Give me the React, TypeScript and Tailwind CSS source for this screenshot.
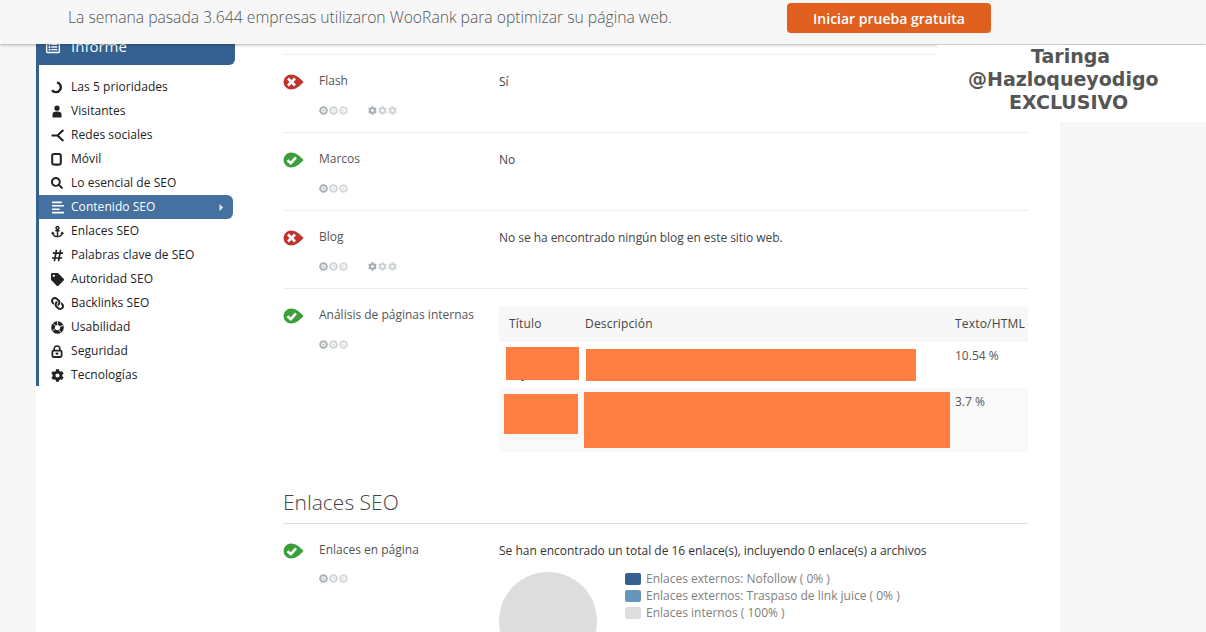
import React from 'react';
import { FaSearch, FaAnchor, FaHashtag, FaTag, FaLink, FaCog, FaCaretRight, FaRegListAlt } from 'react-icons/fa';

const Spinner = () => (
  <svg viewBox="0 0 12 12" className="w-[13px] h-[13px]">
    <path d="M5.5 1.2a4.6 4.6 0 1 1-4.6 7.4" fill="none" stroke="#222" strokeWidth="2.2" />
  </svg>
);

const User = () => (
  <svg viewBox="0 0 12 13" className="w-[12px] h-[13px]">
    <circle cx="6" cy="3.2" r="2.6" fill="#222" />
    <path d="M1.5 12.5V9.5C1.5 7.5 3 6.6 6 6.6s4.5.9 4.5 2.9v3Z" fill="#222" />
  </svg>
);

const Share = () => (
  <svg viewBox="0 0 13 12" className="w-[14px] h-[13px]">
    <path d="M11.5 1 6 6l5.5 5M.5 6H6" fill="none" stroke="#222" strokeWidth="1.9" />
  </svg>
);

const Mobile = () => (
  <svg viewBox="0 0 11 13" className="w-[11px] h-[13px]">
    <rect x="1.2" y="1" width="8.6" height="10.6" rx="1.8" fill="none" stroke="#222" strokeWidth="2" />
    <rect x="4" y="11" width="3" height="1.6" fill="#222" />
  </svg>
);

const Lines = () => (
  <svg viewBox="0 0 13 12" className="w-[14px] h-[13px]">
    <path d="M1 1.2h9M1 4.4h11M1 7.6h7M1 10.8h11" fill="none" stroke="#fff" strokeWidth="1.5" />
  </svg>
);

const Aperture = () => (
  <svg viewBox="0 0 12 12" className="w-[13px] h-[13px]">
    <circle cx="6" cy="6" r="4.1" fill="none" stroke="#222" strokeWidth="3.4" />
    <path d="M6 .5v3M11 4 8.2 5.4M9 10.5 7 8M1.5 9 4 7M2 2.2 4.2 4.6" stroke="#fff" strokeWidth="0.8" />
  </svg>
);

const Lock = () => (
  <svg viewBox="0 0 12 13" className="w-[12px] h-[13px]">
    <path d="M3.2 6V3.8C3.2 2.2 4.4 1 6 1s2.8 1.2 2.8 2.8V6" fill="none" stroke="#222" strokeWidth="1.6" />
    <rect x="1.4" y="5.6" width="9.2" height="6.4" rx="1.2" fill="none" stroke="#222" strokeWidth="1.8" />
    <rect x="4.6" y="7.6" width="2.8" height="2" fill="#222" />
  </svg>
);

const navItems = [
  { label: 'Las 5 prioridades', icon: <Spinner /> },
  { label: 'Visitantes', icon: <User /> },
  { label: 'Redes sociales', icon: <Share /> },
  { label: 'Móvil', icon: <Mobile /> },
  { label: 'Lo esencial de SEO', icon: <FaSearch className="text-[12px] text-[#222]" /> },
  { label: 'Contenido SEO', icon: <Lines />, active: true },
  { label: 'Enlaces SEO', icon: <FaAnchor className="text-[13px] text-[#222]" /> },
  { label: 'Palabras clave de SEO', icon: <FaHashtag className="text-[13px] text-[#222]" /> },
  { label: 'Autoridad SEO', icon: <FaTag className="text-[13px] text-[#222]" /> },
  { label: 'Backlinks SEO', icon: <FaLink className="text-[13px] text-[#222] -scale-x-100" /> },
  { label: 'Usabilidad', icon: <Aperture /> },
  { label: 'Seguridad', icon: <Lock /> },
  { label: 'Tecnologías', icon: <FaCog className="text-[13px] text-[#222]" /> },
];

const StatusIcon = ({ ok }: { ok: boolean }) => (
  <svg viewBox="0 0 21 16" className="w-[21px] h-[16px]">
    <path d="M8 0.5C12.5 0.5 17 4 20.5 8 17 12 12.5 15.5 8 15.5A7.5 7.5 0 0 1 8 0.5Z" fill={ok ? '#3c9f3c' : '#c0342f'} />
    {ok ? (
      <path d="M4.5 8.2 7.8 11.2 13 5.4" fill="none" stroke="#fff" strokeWidth="2.6" />
    ) : (
      <path d="M5 4.5 12 11.5M12 4.5 5 11.5" fill="none" stroke="#fff" strokeWidth="2.6" />
    )}
  </svg>
);

const Dots = () => (
  <div className="flex gap-[1px]">
    {['#a9b2b5', '#d0d4d5', '#d6d9da'].map((c) => (
      <svg key={c} viewBox="0 0 9 9" className="w-[9px] h-[9px]">
        <circle cx="4.5" cy="4.5" r="3.3" fill="none" stroke={c} strokeWidth="2" />
        <circle cx="4.5" cy="4.5" r="1" fill={c} />
      </svg>
    ))}
  </div>
);

const Gears = () => (
  <div className="flex gap-[1px] ml-[20px]">
    <FaCog className="text-[9px] text-[#a3aeb2]" />
    <FaCog className="text-[9px] text-[#cdd2d4]" />
    <FaCog className="text-[9px] text-[#cdd2d4]" />
  </div>
);

const Row = ({
  ok,
  label,
  gears,
  children,
}: {
  ok: boolean;
  label: string;
  gears?: boolean;
  children: React.ReactNode;
}) => (
  <div className="flex border-b border-[#eeeeee] h-[78px] pt-[18px]">
    <div className="w-[36px] pt-[1px] shrink-0">
      <StatusIcon ok={ok} />
    </div>
    <div className="w-[180px] shrink-0">
      <div className="text-[12px] leading-[16px] text-[#555]">{label}</div>
      <div className="flex mt-[17px]">
        <Dots />
        {gears && <Gears />}
      </div>
    </div>
    <div className="flex-1 text-[12px] leading-[16px] text-[#444] pt-[1px] tracking-[-0.05px]">{children}</div>
  </div>
);

const Legend = ({ color, children }: { color: string; children: React.ReactNode }) => (
  <div className="flex items-center h-[17px]">
    <span className={`w-[16px] h-[12px] rounded-[2px] mr-[5px] ${color}`} />
    <span className="text-[12px] text-[#808080]">{children}</span>
  </div>
);

export default function App() {
  return (
    <div
      className="relative flex h-[632px] w-[1206px] overflow-hidden bg-[#f7f7f8]"
      style={{ fontFamily: '"Open Sans", sans-serif' }}
    >
      {/* top promo bar */}
      <div className="absolute top-0 left-0 w-full h-[44px] z-20 bg-[#f7f7f7] shadow-[0_1px_3px_rgba(0,0,0,0.3)] flex items-center">
        <span className="ml-[68px] w-[719px] -mt-[8px] text-[15.7px] font-light text-[#555] whitespace-nowrap">
          La semana pasada 3.644 empresas utilizaron WooRank para optimizar su página web.
        </span>
        <button className="-mt-[8px] w-[204px] h-[30px] rounded-[4px] bg-[#e0611f] text-white text-[14px] font-semibold">
          Iniciar prueba gratuita
        </button>
      </div>

      {/* watermark */}
      <div
        className="absolute z-30 left-[937px] top-[45px] w-[269px] h-[77px] bg-white pl-[31px] text-[#555] text-[19px] font-bold leading-[23px] whitespace-nowrap"
        style={{ fontFamily: '"DejaVu Sans", sans-serif' }}
      >
        <div className="pl-[63px]">Taringa</div>
        <div>@Hazloqueyodigo</div>
        <div className="pl-[41px]">EXCLUSIVO</div>
      </div>

      <div className="w-[36px] shrink-0" />

      <div className="w-[1024px] shrink-0 bg-white flex">
        {/* sidebar */}
        <aside className="w-[247px] shrink-0 pt-[28px]">
          <div className="w-[199px] h-[37px] bg-[#34618f] rounded-br-[6px] flex items-center pl-[10px] text-white text-[15px]">
            <FaRegListAlt className="text-[14px] mr-[11px]" />
            Informe
          </div>
          <nav className="w-[197px] h-[321px] border-l-[3px] border-[#34618f] pt-[10px]">
            {navItems.map((item) => (
              <div
                key={item.label}
                className={`flex items-center h-[24px] text-[12px] ${
                  item.active ? 'bg-[#44719f] text-white rounded-r-[6px]' : 'text-[#222]'
                }`}
              >
                <span className="w-[32px] pl-[12px] flex justify-start">{item.icon}</span>
                <span className="flex-1 tracking-[0.05px]">{item.label}</span>
                {item.active && <FaCaretRight className="text-[11px] mr-[6px] text-[#dde6ee]" />}
              </div>
            ))}
          </nav>
        </aside>

        {/* main column */}
        <main className="w-[745px] shrink-0 pt-[54px]">
          <div className="border-t border-[#eeeeee]" />
          <Row ok={false} label="Flash" gears>
            Sí
          </Row>
          <Row ok label="Marcos">
            No
          </Row>
          <Row ok={false} label="Blog" gears>
            No se ha encontrado ningún blog en este sitio web.
          </Row>

          <div className="flex pt-[18px] h-[164px]">
            <div className="w-[36px] pt-[1px] shrink-0">
              <StatusIcon ok />
            </div>
            <div className="w-[180px] shrink-0">
              <div className="text-[12px] leading-[16px] text-[#555] whitespace-nowrap">Análisis de páginas internas</div>
              <div className="mt-[17px]">
                <Dots />
              </div>
            </div>
            <div className="relative w-[529px] text-[12px] text-[#555]">
              <div className="flex h-[35px] pb-[2px] items-center bg-[#f7f7f7] font-medium text-[#444] tracking-[0.2px]">
                <span className="w-[86px] pl-[10px]">Título</span>
                <span className="w-[370px]">Descripción</span>
                <span className="whitespace-nowrap">Texto/HTML</span>
              </div>
              <div className="h-[46px] pl-[456px] pt-[5px]">10.54 %</div>
              <div className="h-[64px] pl-[456px] pt-[5px] bg-[#f9f9f9]">3.7 %</div>
              {/* redactions from the screenshot */}
              <div className="absolute left-[22px] top-[73px] w-[3px] h-[1px] bg-[#666]" />
              <div className="absolute left-[7px] top-[40px] w-[73px] h-[33px] bg-[#fe7f41]" />
              <div className="absolute left-[87px] top-[42px] w-[330px] h-[32px] bg-[#fe7f41]" />
              <div className="absolute left-[5px] top-[87px] w-[74px] h-[40px] bg-[#fe7f41]" />
              <div className="absolute left-[85px] top-[85px] w-[366px] h-[56px] bg-[#fe7f41]" />
            </div>
          </div>

          <h2 className="mt-[34px] text-[21px] font-light leading-[31px] text-[#444] border-b border-[#dddddd] h-[37px] w-[745px]">
            Enlaces SEO
          </h2>

          <div className="flex pt-[18px]">
            <div className="w-[36px] pt-[1px] shrink-0">
              <StatusIcon ok />
            </div>
            <div className="w-[180px] shrink-0">
              <div className="text-[12px] leading-[16px] text-[#555]">Enlaces en página</div>
              <div className="mt-[16px]">
                <Dots />
              </div>
            </div>
            <div className="flex-1">
              <div className="text-[12px] leading-[16px] text-[#333] pt-[1px] whitespace-nowrap">
                Se han encontrado un total de 16 enlace(s), incluyendo 0 enlace(s) a archivos
              </div>
              <div className="flex mt-[13px]">
                <div className="w-[98px] h-[98px] rounded-full bg-[#dddddd]" />
                <div className="ml-[28px] -mt-[2px]">
                  <Legend color="bg-[#34618f]">Enlaces externos: Nofollow ( 0% )</Legend>
                  <Legend color="bg-[#6796bd]">Enlaces externos: Traspaso de link juice ( 0% )</Legend>
                  <Legend color="bg-[#dddddd]">Enlaces internos ( 100% )</Legend>
                </div>
              </div>
            </div>
          </div>
        </main>
      </div>

      <div className="flex-1" />
    </div>
  );
}
